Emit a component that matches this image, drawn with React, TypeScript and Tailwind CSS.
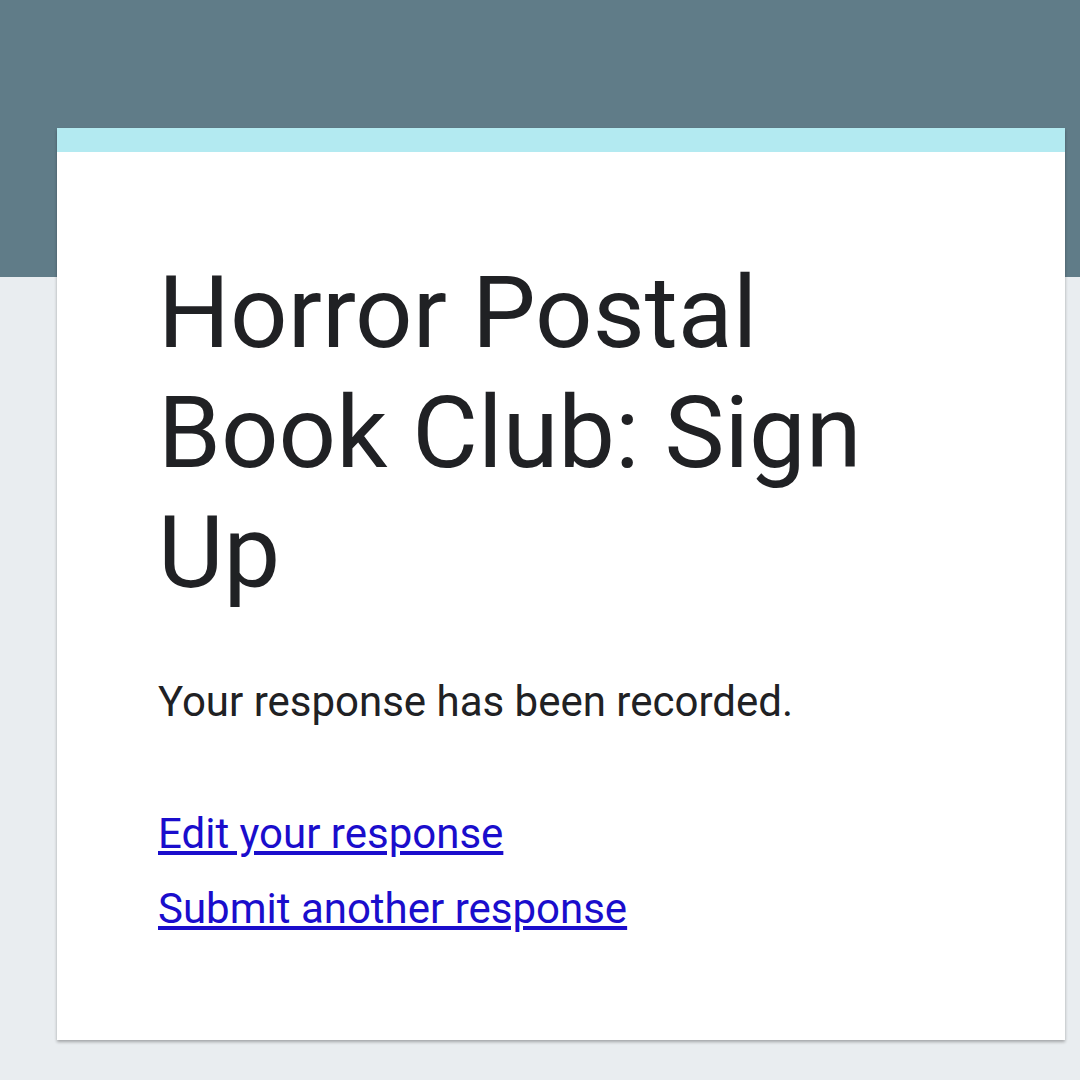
export default function App() {
  return (
    <div className="relative w-[1080px] h-[1080px] overflow-hidden bg-[#e9edf0]" style={{ fontFamily: 'Roboto, "Liberation Sans", sans-serif' }}>
      <div className="h-[277px] bg-[#607c88]" />
      <div className="absolute left-[57px] top-[128px] w-[1008px] h-[912px] bg-white shadow-[0_2px_3px_rgba(0,0,0,0.3)] flex flex-col">
        <div className="h-[24px] bg-[#b3eaf1]" />
        <div className="pl-[101px] pr-[40px] pt-[101px] flex flex-col">
          <h1 className="w-[760px] text-[101px] leading-[120px] text-[#202124] font-normal">Horror Postal Book Club: Sign Up</h1>
          <p className="mt-[63px] text-[42px] leading-[52px] text-[#202124]">Your response has been recorded.</p>
          <div className="mt-[80px] flex flex-col gap-[23px]">
            <a href="#" className="text-[42px] leading-[52px] text-[#1a0dcc] underline">Edit your response</a>
            <a href="#" className="text-[42px] leading-[52px] text-[#1a0dcc] underline">Submit another response</a>
          </div>
        </div>
      </div>
    </div>
  );
}
